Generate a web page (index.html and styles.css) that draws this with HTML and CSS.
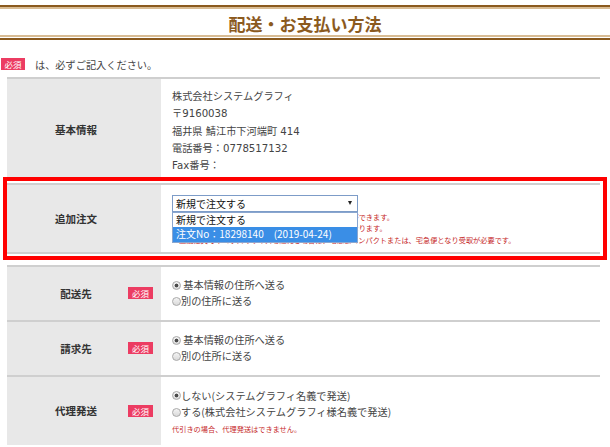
FILE: index.html
```html
<!DOCTYPE html>
<html lang="ja">
<head>
<meta charset="utf-8">
<title>配送・お支払い方法</title>
<link rel="stylesheet" href="styles.css">
</head>
<body>
<header class="title-bar">
  <h1 class="title">配送・お支払い方法</h1>
</header>

<p class="req-note"><span class="badge">必須</span>は、必ずご記入ください。</p>

<div class="form">
  <div class="row">
    <div class="label">基本情報</div>
    <div class="value basic">
      <p>株式会社システムグラフィ</p>
      <p>〒9160038</p>
      <p>福井県 鯖江市下河端町 414</p>
      <p>電話番号：0778517132</p>
      <p>Fax番号：</p>
    </div>
  </div>

  <div class="row row-add">
    <div class="label">追加注文</div>
    <div class="value add">
      <div class="select">
        <span class="select-text">新規で注文する</span><span class="arrow"></span>
        <ul class="dropdown">
          <li class="option">新規で注文する</li>
          <li class="option selected">注文No：18298140　(2019-04-24)</li>
        </ul>
      </div>
      <p class="note">過去の注文（未発送分）に商品を追加して同梱することができます。</p>
      <p class="note">送料は追加注文分の商品を合わせた合計金額で再計算となります。</p>
      <p class="note">※追加注文でネコポスのサイズを超える場合は、宅急便コンパクトまたは、宅急便となり受取が必要です。</p>
    </div>
  </div>

  <div class="row">
    <div class="label">配送先<span class="badge badge-row">必須</span></div>
    <div class="value radios">
      <p><span class="radio checked"></span> 基本情報の住所へ送る</p>
      <p><span class="radio"></span>別の住所に送る</p>
    </div>
  </div>

  <div class="row">
    <div class="label">請求先<span class="badge badge-row">必須</span></div>
    <div class="value radios">
      <p><span class="radio checked"></span> 基本情報の住所へ送る</p>
      <p><span class="radio"></span>別の住所に送る</p>
    </div>
  </div>

  <div class="row">
    <div class="label">代理発送<span class="badge badge-row">必須</span></div>
    <div class="value radios proxy">
      <p><span class="radio checked"></span>しない(システムグラフィ名義で発送)</p>
      <p><span class="radio"></span>する(株式会社システムグラフィ様名義で発送)</p>
      <p class="note note-proxy">代引きの場合、代理発送はできません。</p>
    </div>
  </div>
</div>

<div class="highlight"></div>
</body>
</html>
```

FILE: styles.css
```css
* {
  box-sizing: border-box;
}

html, body {
  margin: 0;
  padding: 0;
  background: #fff;
}

body {
  position: relative;
  width: 610px;
  height: 447px;
  overflow: hidden;
  font-family: "DejaVu Sans", "Noto Sans CJK JP", sans-serif;
  font-size: 10.2px;
  color: #444;
}

p {
  margin: 0;
}

/* ---------- title ---------- */
.title-bar {
  margin-top: 5px;
  border-top: 2px solid #8b5a1e;
  border-bottom: 2px solid #8b5a1e;
}

.title {
  margin: 0 0 1px;
  height: 30px;
  padding-top: 4px;
  border-top: 2px solid #d8bc94;
  border-bottom: 2px solid #d8bc94;
  font-family: "Noto Sans CJK JP", sans-serif;
  font-size: 17px;
  font-weight: bold;
  line-height: 22px;
  color: #8b5a1e;
  text-align: center;
}

/* ---------- required note ---------- */
.req-note {
  display: flex;
  align-items: center;
  height: 12px;
  margin: 18px 0 7px;
  padding-left: 1px;
  font-family: "Noto Sans CJK JP", sans-serif;
  color: #444;
}

.badge {
  display: inline-flex;
  align-items: center;
  justify-content: center;
  width: 24px;
  height: 12px;
  margin-right: 10px;
  background: #ec3c62;
  color: #fff;
  font-family: "Noto Sans CJK JP", sans-serif;
  font-size: 8.5px;
  font-weight: normal;
  line-height: 1;
}

/* ---------- form table ---------- */
.form {
  margin-left: 7px;
  width: 593px;
}

.row {
  display: grid;
  grid-template-columns: 154px 1fr;
  border-top: 2px solid #cfcfcf;
}

.row-add {
  margin-top: 2px;
  margin-bottom: 11px;
  border-bottom: 2px solid #cfcfcf;
}

.label {
  position: relative;
  display: flex;
  align-items: center;
  justify-content: center;
  padding-right: 16px;
  background: #e8e8e8;
  font-family: "Noto Sans CJK JP", sans-serif;
  font-size: 10.5px;
  font-weight: bold;
  color: #333;
}

.badge-row {
  position: absolute;
  right: 8px;
  top: 50%;
  width: 25px;
  margin: -6px 0 0;
}

.value {
  padding-left: 11px;
}

.basic {
  padding-top: 9px;
  padding-bottom: 6.5px;
  line-height: 17.3px;
}

/* ---------- additional order ---------- */
.add {
  padding-top: 10px;
  padding-bottom: 5.5px;
}

.select {
  position: relative;
  display: flex;
  align-items: center;
  justify-content: space-between;
  width: 186px;
  height: 17px;
  padding: 0 5px 0 3px;
  border: 1px solid #7d9cc8;
  background: #fff;
  font-family: "Noto Sans CJK JP", sans-serif;
  font-size: 10px;
  color: #111;
}

.arrow {
  width: 0;
  height: 0;
  border-left: 2.5px solid transparent;
  border-right: 2.5px solid transparent;
  border-top: 4px solid #222;
}

.dropdown {
  position: absolute;
  left: -1px;
  top: 16px;
  width: 186px;
  margin: 0;
  padding: 0;
  list-style: none;
  border: 1px solid #8aa6cf;
  background: #fff;
  z-index: 2;
}

.option {
  height: 14.5px;
  padding-left: 3px;
  line-height: 14.5px;
  font-size: 10px;
  color: #111;
  white-space: nowrap;
}

.option.selected {
  background: #3a8ee6;
  color: #fff;
}

.note {
  font-family: "Noto Sans CJK JP", sans-serif;
  font-size: 7.2px;
  line-height: 11.5px;
  color: #c62828;
  white-space: nowrap;
}

/* ---------- radios ---------- */
.radios {
  padding-top: 10px;
  padding-bottom: 10px;
  line-height: 16.5px;
  font-family: "Noto Sans CJK JP", sans-serif;
}

.radios p {
  display: flex;
  align-items: center;
  white-space: pre;
}

.radio {
  display: inline-block;
  flex: none;
  width: 9px;
  height: 9px;
  border-radius: 50%;
  border: 1px solid #a9a9a9;
  background: linear-gradient(#f4f4f4, #d9d9d9);
}

.radio.checked {
  background:
    radial-gradient(circle, #4a4a4a 0 1.6px, transparent 2.2px),
    linear-gradient(#f4f4f4, #d9d9d9);
}

.proxy {
  padding-top: 10.75px;
}

.proxy .note-proxy {
  display: block;
  margin-top: 2px;
  line-height: 12px;
}

/* ---------- annotation box ---------- */
.highlight {
  position: absolute;
  left: 3px;
  top: 177px;
  width: 604px;
  height: 83px;
  border: 4px solid #ff0000;
  pointer-events: none;
}
```
